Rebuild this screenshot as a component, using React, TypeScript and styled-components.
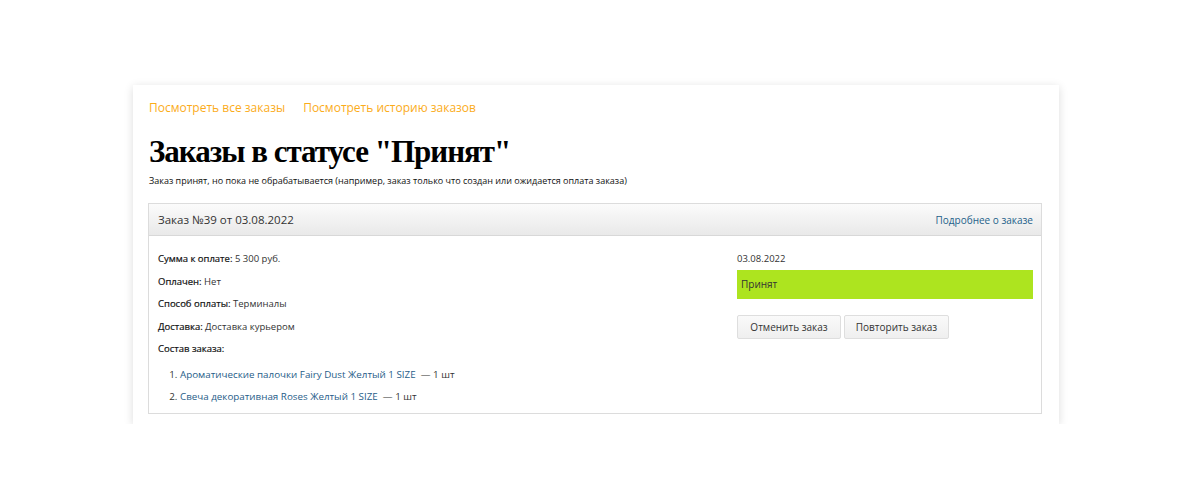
import React from "react";
import styled, { createGlobalStyle } from "styled-components";

const GlobalStyle = createGlobalStyle`
  body {
    margin: 0;
    background: #fff;
    font-family: "Open Sans", "Liberation Sans", sans-serif;
    color: #333;
  }
`;

const Card = styled.div`
  width: 926px;
  box-sizing: border-box;
  margin: 85px 0 0 133px;
  padding: 15px 17px 10px 15px;
  background: #fff;
  box-shadow: 0 2px 9px rgba(0, 0, 0, 0.14);
`;

const TopLinks = styled.div`
  display: flex;
  gap: 18px;
  padding-left: 1px;
`;

const TopLink = styled.a`
  font-size: 12px;
  line-height: 16px;
  color: #fbac1a;
  text-decoration: none;
`;

const Title = styled.h1`
  margin: 17px 0 0 1px;
  font-family: "Liberation Serif", "Times New Roman", serif;
  font-size: 31px;
  letter-spacing: -1px;
  line-height: 37px;
  font-weight: bold;
  color: #000;
`;

const Description = styled.p`
  margin: 5px 0 0 1px;
  font-size: 9px;
  line-height: 12px;
  color: #111;
`;

const Order = styled.div`
  margin-top: 16px;
  border: 1px solid #dcdcdc;
`;

const OrderHeader = styled.div`
  display: flex;
  align-items: center;
  justify-content: space-between;
  height: 31px;
  padding: 0 8px 0 9px;
  background: linear-gradient(#fbfbfb, #e9e9e9);
  border-bottom: 1px solid #d8d8d8;
`;

const OrderTitle = styled.span`
  font-size: 11.5px;
  color: #333;
`;

const DetailsLink = styled.a`
  font-size: 10px;
  color: #245f8a;
  text-decoration: none;
`;

const OrderBody = styled.div`
  display: flex;
  justify-content: space-between;
  padding: 12px 8px 5px 9px;
`;

const LeftCol = styled.div`
  display: flex;
  flex-direction: column;
`;

const Row = styled.div`
  font-size: 9.5px;
  line-height: 22.5px;
  color: #333;
`;

const Label = styled.span`
  color: #111;
  -webkit-text-stroke: 0.2px #111;
`;

const Items = styled.ol`
  margin: 3px 0 0;
  padding-left: 22px;
  font-size: 9.8px;
  line-height: 22px;
  color: #333;
`;

const ItemLink = styled.a`
  color: #1f5d89;
  text-decoration: none;
`;

const RightCol = styled.div`
  width: 296px;
  display: flex;
  flex-direction: column;
`;

const DateText = styled.div`
  font-size: 9.5px;
  line-height: 21.5px;
  color: #333;
`;

const Status = styled.div`
  height: 29px;
  display: flex;
  align-items: center;
  padding-left: 4px;
  background: #ade41f;
  font-size: 10px;
  color: #333;
`;

const Actions = styled.div`
  display: flex;
  gap: 3px;
  margin-top: 16px;
`;

const Button = styled.button<{ $w: number }>`
  height: 24px;
  width: ${(p) => p.$w}px;
  padding: 0;
  border: 1px solid #dedede;
  border-radius: 2px;
  background: linear-gradient(#fafafa, #efefef);
  font-family: "Open Sans", "Liberation Sans", sans-serif;
  font-size: 10px;
  color: #333;
  cursor: pointer;
`;

const items = [
  "Ароматические палочки Fairy Dust Желтый 1 SIZE",
  "Свеча декоративная Roses Желтый 1 SIZE",
];

export default function App() {
  return (
    <>
      <GlobalStyle />
      <Card>
        <TopLinks>
          <TopLink href="#">Посмотреть все заказы</TopLink>
          <TopLink href="#">Посмотреть историю заказов</TopLink>
        </TopLinks>
        <Title>Заказы в статусе "Принят"</Title>
        <Description>
          Заказ принят, но пока не обрабатывается (например, заказ только что
          создан или ожидается оплата заказа)
        </Description>
        <Order>
          <OrderHeader>
            <OrderTitle>Заказ №39 от 03.08.2022</OrderTitle>
            <DetailsLink href="#">Подробнее о заказе</DetailsLink>
          </OrderHeader>
          <OrderBody>
            <LeftCol>
              <Row>
                <Label>Сумма к оплате:</Label> 5 300 руб.
              </Row>
              <Row>
                <Label>Оплачен:</Label> Нет
              </Row>
              <Row>
                <Label>Способ оплаты:</Label> Терминалы
              </Row>
              <Row>
                <Label>Доставка:</Label> Доставка курьером
              </Row>
              <Row>
                <Label>Состав заказа:</Label>
              </Row>
              <Items>
                {items.map((name) => (
                  <li key={name}>
                    <ItemLink href="#">{name}</ItemLink>&nbsp; — 1 шт
                  </li>
                ))}
              </Items>
            </LeftCol>
            <RightCol>
              <DateText>03.08.2022</DateText>
              <Status>Принят</Status>
              <Actions>
                <Button $w={104}>Отменить заказ</Button>
                <Button $w={105}>Повторить заказ</Button>
              </Actions>
            </RightCol>
          </OrderBody>
        </Order>
      </Card>
    </>
  );
}
